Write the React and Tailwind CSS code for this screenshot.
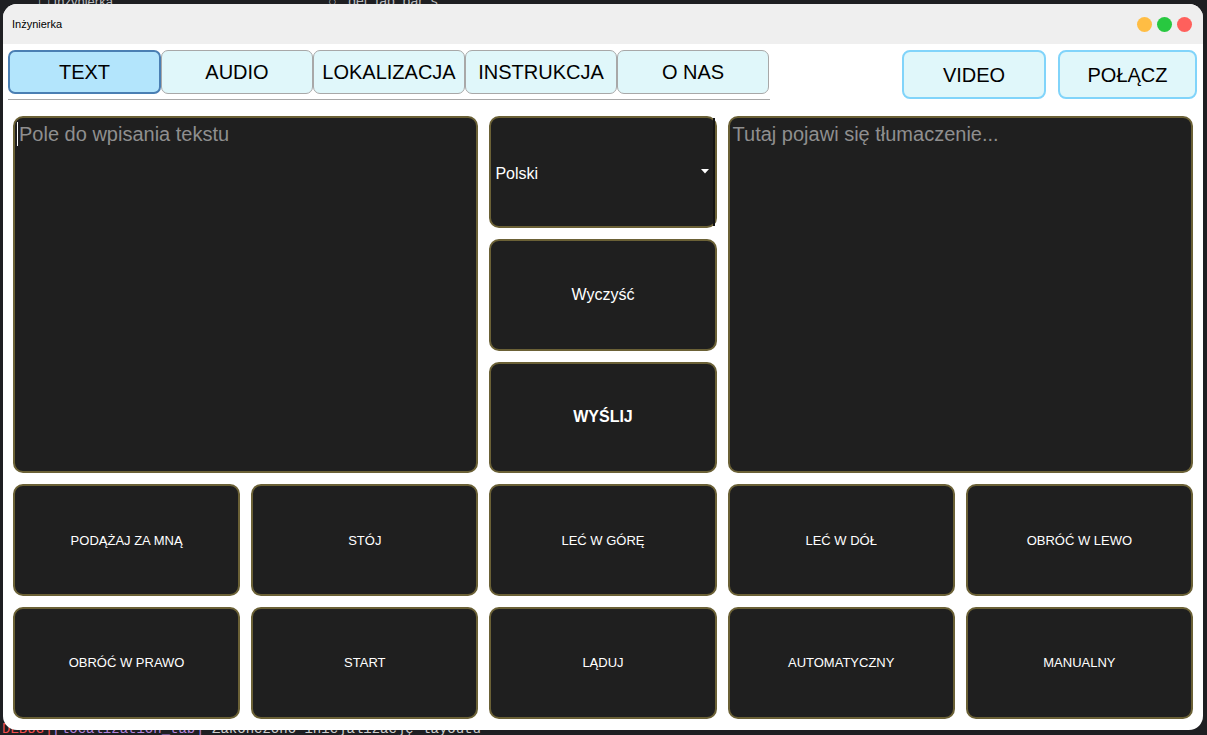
import React from 'react';

const tabs = ['TEXT', 'AUDIO', 'LOKALIZACJA', 'INSTRUKCJA', 'O NAS'];

const commands = [
  'PODĄŻAJ ZA MNĄ',
  'STÓJ',
  'LEĆ W GÓRĘ',
  'LEĆ W DÓŁ',
  'OBRÓĆ W LEWO',
  'OBRÓĆ W PRAWO',
  'START',
  'LĄDUJ',
  'AUTOMATYCZNY',
  'MANUALNY',
];

const cell = 'rounded-[10px] border-2 border-[#6b6136] bg-[#1f1f1f]';

function CmdButton({ label, className = 'text-[13px]' }) {
  return (
    <div className={`${cell} flex items-center justify-center text-white ${className}`}>
      {label}
    </div>
  );
}

export default function App() {
  return (
    <div className="relative w-[1207px] h-[735px] overflow-hidden bg-[#1e1f22] font-['Liberation_Sans',Arial,sans-serif]">
      {/* desktop behind the window */}
      <div className="absolute left-[38px] -top-[8px] text-[13px] text-[#b9bbbe]">▢ Inżynierka</div>
      <div className="absolute left-[328px] -top-[9px] text-[14px] text-[#b9bbbe]">○&nbsp;&nbsp;&nbsp;get_tab_bar_s</div>
      <div className="absolute left-[2px] top-[719px] text-[14px] font-['Liberation_Mono',monospace] whitespace-nowrap">
        <span className="text-[#f14c4c]">DEBUG]</span>
        <span className="text-[#b180d7]">[localization_tab]</span>
        <span className="text-[#cccccc]">  Zakończono inicjalizację layoutu</span>
      </div>

      <div className="relative ml-[3px] mt-[4px] w-[1200px] h-[726px] rounded-[14px] bg-white overflow-hidden flex flex-col">
        {/* title bar */}
        <div className="h-[40px] shrink-0 bg-[#efefef] flex items-center pl-[9px] pr-[11px]">
          <span className="text-[11px] text-black">Inżynierka</span>
          <div className="ml-auto flex gap-[5px]">
            <span className="w-[15px] h-[15px] rounded-full bg-[#ffbd44]" />
            <span className="w-[15px] h-[15px] rounded-full bg-[#28c840]" />
            <span className="w-[15px] h-[15px] rounded-full bg-[#ff605c]" />
          </div>
        </div>

        {/* tabs + actions */}
        <div className="flex mt-[6px] pl-[5px] pr-[6px]">
          <div className="flex flex-col">
            <div className="flex">
              {tabs.map((t, i) => (
                <div
                  key={t}
                  className={
                    i === 0
                      ? 'w-[153px] h-[44px] rounded-[7px] border-2 border-[#4a7fb3] bg-[#b3e5fc] flex items-center justify-center text-[20px] text-black'
                      : 'w-[152px] h-[44px] rounded-[7px] border border-[#a8a8a8] bg-[#e0f7fa] flex items-center justify-center text-[20px] text-black'
                  }
                >
                  {t}
                </div>
              ))}
            </div>
            <div className="mt-[5px] h-px w-[762px] bg-[#a8a8a8]" />
          </div>
          <div className="ml-auto flex gap-[12px]">
            <div className="w-[144px] h-[49px] rounded-[8px] border-2 border-[#81d4fa] bg-[#e0f7fa] flex items-center justify-center text-[20px] text-black">
              VIDEO
            </div>
            <div className="w-[139px] h-[49px] rounded-[8px] border-2 border-[#81d4fa] bg-[#e0f7fa] flex items-center justify-center text-[20px] text-black">
              POŁĄCZ
            </div>
          </div>
        </div>

        {/* main grid */}
        <div className="mt-[16px] ml-[10px] w-[1180px] h-[603px] grid grid-cols-5 grid-rows-5 gap-[11px]">
          <div className={`${cell} col-span-2 row-span-3 px-[2px] py-[1px]`}>
            <div className="flex items-center text-[20px] text-[#8f8f8f]">
              <span className="w-px h-[24px] bg-white mr-[1px]" />
              Pole do wpisania tekstu
            </div>
          </div>

          <div className={`${cell} relative flex items-center pl-[4px] pr-[6px] pt-[4px] text-[16px] text-white`}>
            <span>Polski</span>
            <svg className="ml-auto -mt-[4px]" width="8" height="5" viewBox="0 0 8 5">
              <path d="M0 0 H8 L4 4.5 Z" fill="#fff" />
            </svg>
            <span className="absolute right-0 top-0 bottom-0 w-[2px] bg-[#141414]" />
          </div>

          <div className={`${cell} col-span-2 row-span-3 px-[3px] py-[1px]`}>
            <div className="text-[20px] text-[#8f8f8f]">Tutaj pojawi się tłumaczenie...</div>
          </div>

          <div className="col-start-3 row-start-2 grid">
            <CmdButton label="Wyczyść" className="text-[16px]" />
          </div>
          <div className="col-start-3 row-start-3 grid">
            <CmdButton label="WYŚLIJ" className="text-[16px] font-bold" />
          </div>

          {commands.map((c) => (
            <CmdButton key={c} label={c} />
          ))}
        </div>
      </div>
    </div>
  );
}
